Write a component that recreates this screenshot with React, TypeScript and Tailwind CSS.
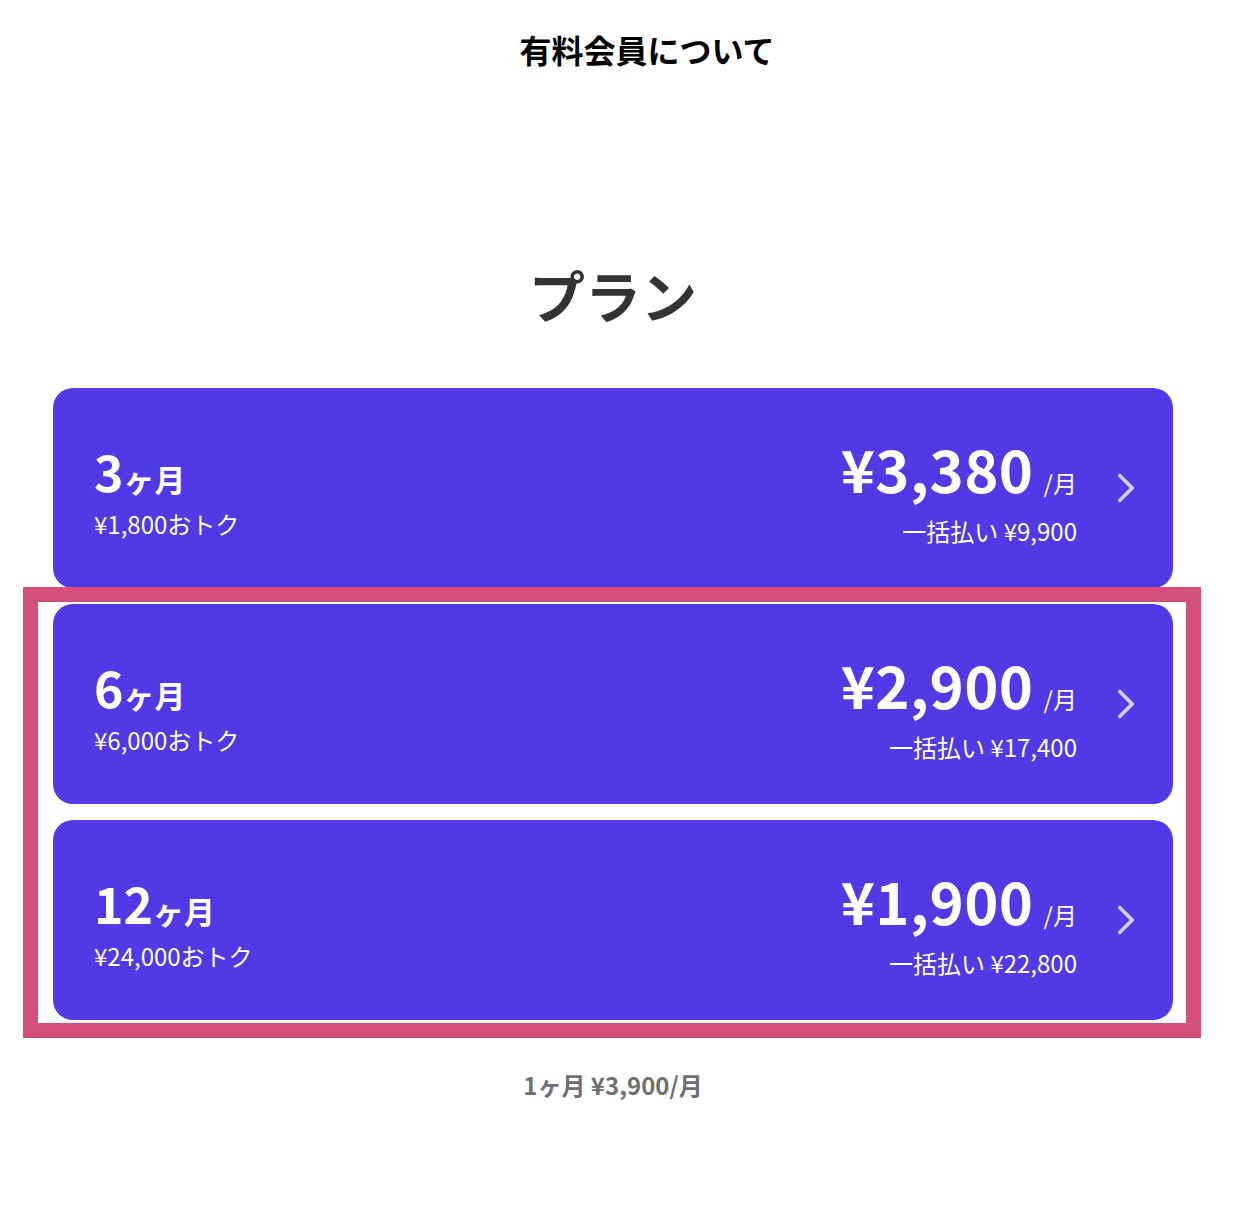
import { ChevronRight } from "lucide-react";

type Plan = {
  months: string;
  saving: string;
  price: string;
  total: string;
};

const plans: Plan[] = [
  { months: "3", saving: "¥1,800おトク", price: "¥3,380", total: "一括払い ¥9,900" },
  { months: "6", saving: "¥6,000おトク", price: "¥2,900", total: "一括払い ¥17,400" },
  { months: "12", saving: "¥24,000おトク", price: "¥1,900", total: "一括払い ¥22,800" },
];

function PlanCard({ plan }: { plan: Plan }) {
  return (
    <button className="flex h-[200px] w-full items-center rounded-[20px] bg-[#5139e5] pl-[41px] pr-[22px] text-left text-white">
      <div className="mt-[5px] flex flex-col">
        <div className="flex items-baseline font-bold leading-none">
          <span className="text-[50px]">{plan.months}</span>
          <span className="text-[31px]">ヶ月</span>
        </div>
        <div className="mt-[17px] text-[24px] leading-none">{plan.saving}</div>
      </div>
      <div className="ml-auto mt-[6px] flex flex-col items-end">
        <div className="flex items-baseline leading-none">
          <span className="text-[58px] font-bold tracking-[0.5px]">{plan.price}</span>
          <span className="ml-[10px] text-[24px]">/月</span>
        </div>
        <div className="mt-[22px] text-[24px] leading-none">{plan.total}</div>
      </div>
      <ChevronRight className="ml-[24px] text-[#cfd2da]" size={50} strokeWidth={1.8} />
    </button>
  );
}

export default function App() {
  return (
    <div className="min-h-[1214px] w-[1226px] bg-white" style={{ fontFamily: '"Noto Sans CJK JP", "Noto Sans", sans-serif' }}>
      <header className="flex h-[100px] items-start justify-center pl-[68px] pt-[33px]">
        <h1 className="text-[32px] font-bold leading-none text-black">有料会員について</h1>
      </header>
      <h2 className="mt-[166px] text-center text-[56px] font-bold leading-none text-[#333333]">プラン</h2>
      <div className="relative mt-[66px] flex flex-col gap-[16px] px-[53px]">
        {plans.map((p) => (
          <PlanCard key={p.months} plan={p} />
        ))}
        <div className="pointer-events-none absolute left-[23px] top-[199px] h-[451px] w-[1178px] border-[15px] border-[#d54d7b]" />
      </div>
      <p className="mt-[53px] text-center text-[24px] font-bold leading-none text-[#6e6e73]">1ヶ月 ¥3,900/月</p>
    </div>
  );
}
